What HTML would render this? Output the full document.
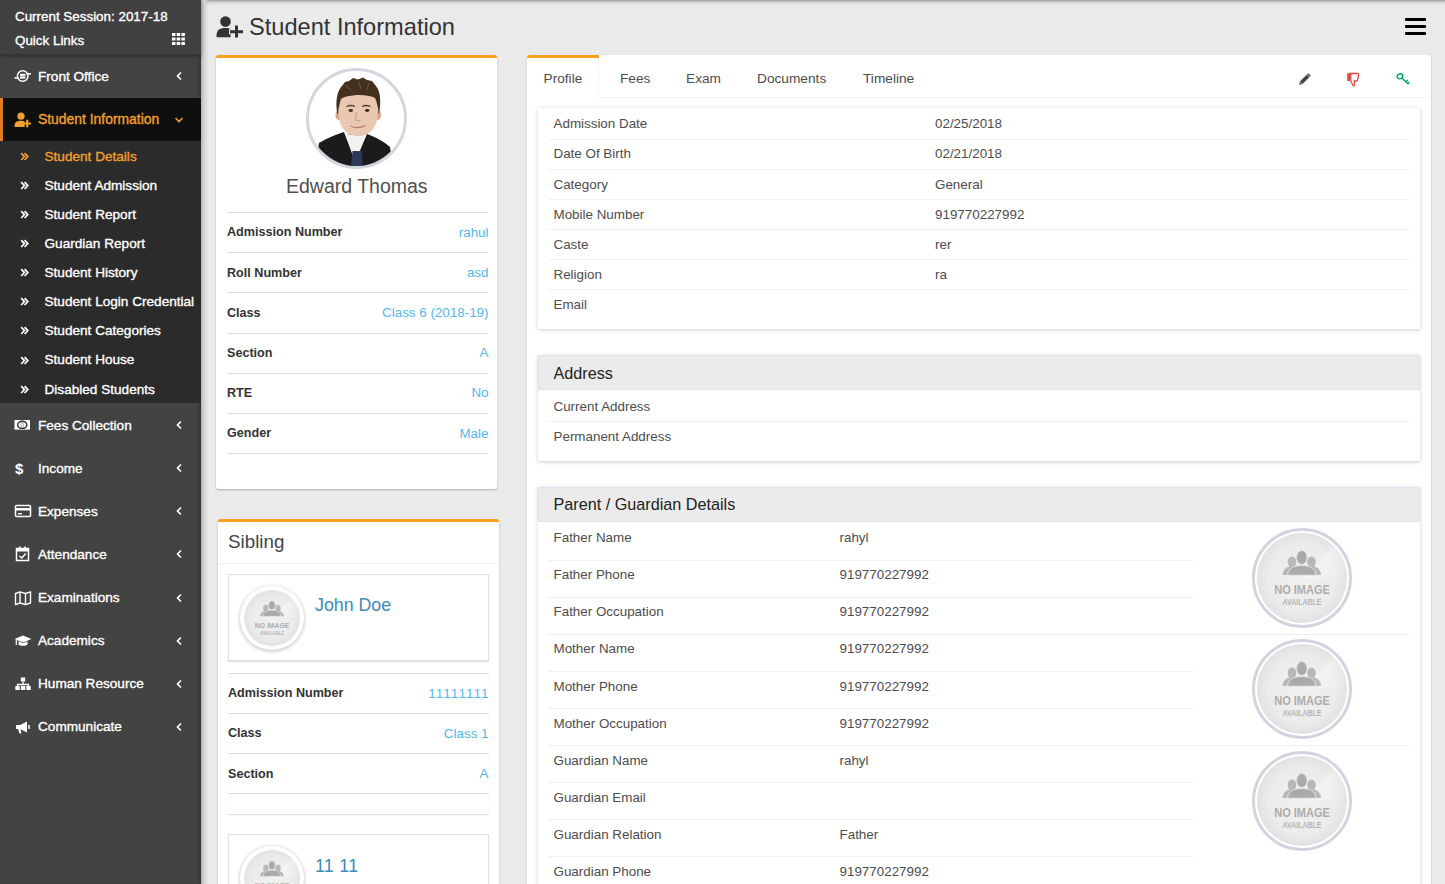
<!DOCTYPE html>
<html><head><meta charset="utf-8">
<style>
*{box-sizing:border-box;}
html,body{margin:0;padding:0;}
body{width:1445px;height:884px;overflow:hidden;position:relative;background:#eaeaea;font-family:"Liberation Sans",sans-serif;color:#333;}
.abs{position:absolute;}
.t{position:absolute;white-space:nowrap;line-height:1;}
/* sidebar */
#sb{position:absolute;left:0;top:0;width:201px;height:884px;background:#434343;box-shadow:inset -2px 0 2px rgba(0,0,0,.18);}
#sbh{position:absolute;left:0;top:0;width:201px;height:54px;background:#414141;box-shadow:0 2px 4px rgba(0,0,0,.35);z-index:2;}
.sbt{position:absolute;color:#fff;font-size:13.4px;white-space:nowrap;line-height:1;-webkit-text-stroke:0.35px #fff;}
.mi{position:absolute;left:0;width:201px;height:43px;}
.mi .lbl{position:absolute;left:38px;top:15.5px;color:#fff;font-size:13.6px;line-height:1;white-space:nowrap;-webkit-text-stroke:0.35px currentColor;}
.mi .ic{position:absolute;left:14px;top:14px;width:18px;height:16px;}
.mi .chev{position:absolute;left:175px;top:17px;width:8px;height:10px;}
#sub{position:absolute;left:0;top:141px;width:201px;height:262px;background:#2b2b2b;}
.si{position:absolute;left:0;width:200px;height:29.1px;}
.si .lbl{position:absolute;left:44.5px;top:8.7px;color:#fff;font-size:13.6px;line-height:1;white-space:nowrap;-webkit-text-stroke:0.35px currentColor;}
.si .rr{position:absolute;left:20px;top:10.8px;width:10px;height:9px;}
/* content */
#topsh{position:absolute;left:201px;top:0;width:1244px;height:5px;background:linear-gradient(#9c9c9c,#cdcdcd 40%,rgba(234,234,234,0));}
#sbsh{position:absolute;left:201px;top:0;width:8px;height:884px;background:linear-gradient(90deg,#b5b5b5,#d5d5d5 40%,rgba(234,234,234,0));}
.box{position:absolute;background:#fff;border-radius:3px;box-shadow:0 1px 2px rgba(0,0,0,.25);}
.otop{border-top:3px solid #f7a01b;}
.row{position:absolute;height:1px;background:#e3e3e3;}
.lab{position:absolute;white-space:nowrap;line-height:1;font-size:12.6px;font-weight:bold;color:#333;}
.val{position:absolute;white-space:nowrap;line-height:1;font-size:13.4px;color:#52b8ec;text-align:right;}
.tab{font-size:13.7px;color:#4d4d4d;}
.plab{position:absolute;white-space:nowrap;line-height:1;font-size:13.4px;color:#4d4d4d;}
</style></head><body>
<svg width="0" height="0" style="position:absolute">
<defs>
<radialGradient id="nig" cx="0.5" cy="0.5" r="0.5"><stop offset="0" stop-color="#f1f1f1"/><stop offset="0.75" stop-color="#ebebeb"/><stop offset="1" stop-color="#e2e2e2"/></radialGradient>
<linearGradient id="nih" x1="0" y1="0" x2="1" y2="1"><stop offset="0.45" stop-color="#fff" stop-opacity="0"/><stop offset="0.55" stop-color="#fff" stop-opacity="0.35"/><stop offset="1" stop-color="#fff" stop-opacity="0"/></linearGradient>
<symbol id="noimg" viewBox="0 0 100 100">
<circle cx="50" cy="50" r="45" fill="url(#nig)"/>
<path d="M50 5 A45 45 0 0 1 95 50 L50 50Z" fill="url(#nih)"/>
<g fill="#b8b8b8">
<ellipse cx="40" cy="34" rx="4.3" ry="5.6"/><ellipse cx="59.5" cy="34" rx="4.3" ry="5.6"/>
<path d="M30.5 47 C31 41 34.5 38.5 40 38.5 C44 38.5 46 40 47 43 L47 47Z"/><path d="M69 47 C68.5 41 65 38.5 59.5 38.5 C55.5 38.5 53.5 40 52.5 43 L52.5 47Z"/>
</g>
<g fill="#aaaaaa" stroke="#e8e8e8" stroke-width="0.9">
<ellipse cx="49.8" cy="29.5" rx="5.3" ry="7"/>
<path d="M35.5 47.2 C36 40.5 41 37.5 49.8 37.5 C58.5 37.5 63.5 40.5 64 47.2Z"/>
</g>
<text x="50" y="66.2" text-anchor="middle" font-family="Liberation Sans" font-weight="bold" font-size="13" fill="#acacac" textLength="55.6" lengthAdjust="spacingAndGlyphs">NO IMAGE</text>
<text x="50" y="76.8" text-anchor="middle" font-family="Liberation Sans" font-weight="bold" font-size="8.3" fill="#b5b5b5" textLength="39" lengthAdjust="spacingAndGlyphs">AVAILABLE</text>
</symbol>
</defs></svg>

<!-- SIDEBAR -->
<div id="sb">
  <div id="sbh">
    <div class="sbt" style="left:15px;top:10px;">Current Session: 2017-18</div>
    <div class="sbt" style="left:15px;top:34px;">Quick Links</div>
    <svg class="abs" style="left:172px;top:33px" width="13" height="12" viewBox="0 0 13 12"><g fill="#fff"><rect x="0" y="0" width="3.5" height="3"/><rect x="4.7" y="0" width="3.5" height="3"/><rect x="9.4" y="0" width="3.5" height="3"/><rect x="0" y="4.5" width="3.5" height="3"/><rect x="4.7" y="4.5" width="3.5" height="3"/><rect x="9.4" y="4.5" width="3.5" height="3"/><rect x="0" y="9" width="3.5" height="3"/><rect x="4.7" y="9" width="3.5" height="3"/><rect x="9.4" y="9" width="3.5" height="3"/></g></svg>
  </div>
<div class="mi" style="top:54.00px"><svg class="ic" viewBox="0 0 18 16"><circle cx="8.7" cy="8" r="5.3" fill="none" stroke="#fff" stroke-width="1.5"/><rect x="6" y="5.8" width="5.4" height="4.8" fill="#fff"/><path d="M6 8.2 H11.4" stroke="#434343" stroke-width="0.5"/><path d="M0.5 9.9 H5" stroke="#fff" stroke-width="1.6"/><path d="M12.5 5.9 H17" stroke="#fff" stroke-width="1.6"/></svg><div class="lbl">Front Office</div><svg class="chev" viewBox="0 0 8 10"><path d="M6 1.5 L2.5 5 L6 8.5" fill="none" stroke="#fff" stroke-width="1.6"/></svg></div>
<div class="mi" style="top:98px;background:#0f0f0f;border-left:3px solid #e07d22"><svg class="ic" style="left:11px" viewBox="0 0 18 16"><circle cx="7" cy="4.2" r="3.6" fill="#f0a030"/><path d="M0.5 15 C0.5 10 2.5 8.8 7 8.8 C9 8.8 10 9.2 10.6 9.6 L10.6 15Z" fill="#f0a030"/><path d="M9.5 11.5 H17 M13.25 7.8 V15.2" stroke="#f0a030" stroke-width="2.2"/></svg><div class="lbl" style="left:35px;top:15px;color:#f0a030;font-size:13.9px">Student Information</div><svg class="chev" style="left:171px;top:17.5px;width:10px;height:8px" viewBox="0 0 10 8"><path d="M1.5 2 L5 5.5 L8.5 2" fill="none" stroke="#f0a030" stroke-width="1.6"/></svg></div>
<div id="sub">
<div class="si" style="top:0.00px"><svg class="rr" viewBox="0 0 10 9"><path d="M1.2 1.2 L4.4 4.6 L1.2 8 M4.6 1.2 L7.8 4.6 L4.6 8" fill="none" stroke="#f0a030" stroke-width="1.7"/></svg><div class="lbl" style="color:#f0a030">Student Details</div></div>
<div class="si" style="top:29.11px"><svg class="rr" viewBox="0 0 10 9"><path d="M1.2 1.2 L4.4 4.6 L1.2 8 M4.6 1.2 L7.8 4.6 L4.6 8" fill="none" stroke="#fff" stroke-width="1.7"/></svg><div class="lbl" style="color:#fff">Student Admission</div></div>
<div class="si" style="top:58.22px"><svg class="rr" viewBox="0 0 10 9"><path d="M1.2 1.2 L4.4 4.6 L1.2 8 M4.6 1.2 L7.8 4.6 L4.6 8" fill="none" stroke="#fff" stroke-width="1.7"/></svg><div class="lbl" style="color:#fff">Student Report</div></div>
<div class="si" style="top:87.33px"><svg class="rr" viewBox="0 0 10 9"><path d="M1.2 1.2 L4.4 4.6 L1.2 8 M4.6 1.2 L7.8 4.6 L4.6 8" fill="none" stroke="#fff" stroke-width="1.7"/></svg><div class="lbl" style="color:#fff">Guardian Report</div></div>
<div class="si" style="top:116.44px"><svg class="rr" viewBox="0 0 10 9"><path d="M1.2 1.2 L4.4 4.6 L1.2 8 M4.6 1.2 L7.8 4.6 L4.6 8" fill="none" stroke="#fff" stroke-width="1.7"/></svg><div class="lbl" style="color:#fff">Student History</div></div>
<div class="si" style="top:145.56px"><svg class="rr" viewBox="0 0 10 9"><path d="M1.2 1.2 L4.4 4.6 L1.2 8 M4.6 1.2 L7.8 4.6 L4.6 8" fill="none" stroke="#fff" stroke-width="1.7"/></svg><div class="lbl" style="color:#fff">Student Login Credential</div></div>
<div class="si" style="top:174.67px"><svg class="rr" viewBox="0 0 10 9"><path d="M1.2 1.2 L4.4 4.6 L1.2 8 M4.6 1.2 L7.8 4.6 L4.6 8" fill="none" stroke="#fff" stroke-width="1.7"/></svg><div class="lbl" style="color:#fff">Student Categories</div></div>
<div class="si" style="top:203.78px"><svg class="rr" viewBox="0 0 10 9"><path d="M1.2 1.2 L4.4 4.6 L1.2 8 M4.6 1.2 L7.8 4.6 L4.6 8" fill="none" stroke="#fff" stroke-width="1.7"/></svg><div class="lbl" style="color:#fff">Student House</div></div>
<div class="si" style="top:232.89px"><svg class="rr" viewBox="0 0 10 9"><path d="M1.2 1.2 L4.4 4.6 L1.2 8 M4.6 1.2 L7.8 4.6 L4.6 8" fill="none" stroke="#fff" stroke-width="1.7"/></svg><div class="lbl" style="color:#fff">Disabled Students</div></div>
</div>
<div class="mi" style="top:403.00px"><svg class="ic" viewBox="0 0 18 16"><rect x="0.5" y="3" width="15.5" height="9.6" fill="#fff"/><ellipse cx="8.25" cy="7.8" rx="4.6" ry="3.6" fill="none" stroke="#2a2a2a" stroke-width="1.4"/><ellipse cx="8.25" cy="7.8" rx="1.3" ry="2.4" fill="none" stroke="#777" stroke-width="0.6"/></svg><div class="lbl">Fees Collection</div><svg class="chev" viewBox="0 0 8 10"><path d="M6 1.5 L2.5 5 L6 8.5" fill="none" stroke="#fff" stroke-width="1.6"/></svg></div>
<div class="mi" style="top:446.13px"><svg class="ic" viewBox="0 0 18 16"><text x="1" y="14" font-family="Liberation Sans" font-weight="bold" font-size="15" fill="#fff">$</text></svg><div class="lbl">Income</div><svg class="chev" viewBox="0 0 8 10"><path d="M6 1.5 L2.5 5 L6 8.5" fill="none" stroke="#fff" stroke-width="1.6"/></svg></div>
<div class="mi" style="top:489.26px"><svg class="ic" viewBox="0 0 18 16"><rect x="1.5" y="2.5" width="15" height="11" rx="1" fill="none" stroke="#fff" stroke-width="1.5"/><rect x="1.5" y="5" width="15" height="2.5" fill="#fff"/><rect x="4" y="10" width="4" height="1.4" fill="#fff"/></svg><div class="lbl">Expenses</div><svg class="chev" viewBox="0 0 8 10"><path d="M6 1.5 L2.5 5 L6 8.5" fill="none" stroke="#fff" stroke-width="1.6"/></svg></div>
<div class="mi" style="top:532.39px"><svg class="ic" viewBox="0 0 18 16"><rect x="2.5" y="2.5" width="12" height="12" fill="none" stroke="#fff" stroke-width="1.5"/><rect x="2.5" y="2.5" width="12" height="3" fill="#fff"/><rect x="5" y="0.5" width="1.6" height="3" fill="#fff"/><rect x="10.4" y="0.5" width="1.6" height="3" fill="#fff"/><path d="M5.5 10 L7.8 12 L11.8 7.5" fill="none" stroke="#fff" stroke-width="1.5"/></svg><div class="lbl">Attendance</div><svg class="chev" viewBox="0 0 8 10"><path d="M6 1.5 L2.5 5 L6 8.5" fill="none" stroke="#fff" stroke-width="1.6"/></svg></div>
<div class="mi" style="top:575.52px"><svg class="ic" viewBox="0 0 18 16"><path d="M1.5 3.5 L6 1.8 L11.5 3.5 L16.5 1.8 L16.5 13 L11.5 14.7 L6 13 L1.5 14.7Z M6 1.8 V13 M11.5 3.5 V14.7" fill="none" stroke="#fff" stroke-width="1.4" stroke-linejoin="round"/></svg><div class="lbl">Examinations</div><svg class="chev" viewBox="0 0 8 10"><path d="M6 1.5 L2.5 5 L6 8.5" fill="none" stroke="#fff" stroke-width="1.6"/></svg></div>
<div class="mi" style="top:618.65px"><svg class="ic" viewBox="0 0 18 16"><path d="M0.5 6 L9 2.5 L17.5 6 L9 9.5Z" fill="#fff"/><path d="M4.5 8.3 V11.5 C6 13.2 12 13.2 13.5 11.5 V8.3 L9 10.2Z" fill="#fff"/><path d="M2.3 6.8 V12" stroke="#fff" stroke-width="1.2"/></svg><div class="lbl">Academics</div><svg class="chev" viewBox="0 0 8 10"><path d="M6 1.5 L2.5 5 L6 8.5" fill="none" stroke="#fff" stroke-width="1.6"/></svg></div>
<div class="mi" style="top:661.78px"><svg class="ic" viewBox="0 0 18 16"><rect x="6.8" y="1.5" width="4.4" height="4" fill="#fff"/><path d="M9 5.5 V8.5 M3.5 10.5 V8.5 H14.5 V10.5" fill="none" stroke="#fff" stroke-width="1.3"/><rect x="1.3" y="10" width="4.4" height="4" fill="#fff"/><rect x="6.8" y="10" width="4.4" height="4" fill="#fff"/><rect x="12.3" y="10" width="4.4" height="4" fill="#fff"/></svg><div class="lbl">Human Resource</div><svg class="chev" viewBox="0 0 8 10"><path d="M6 1.5 L2.5 5 L6 8.5" fill="none" stroke="#fff" stroke-width="1.6"/></svg></div>
<div class="mi" style="top:704.91px"><svg class="ic" viewBox="0 0 18 16"><path d="M2 6 H6 L13 2.5 V13.5 L6 10 H2Z" fill="#fff"/><path d="M4 10 L5.5 14.5 H7.5 L6.5 10Z" fill="#fff"/><path d="M15 6 V10" stroke="#fff" stroke-width="1.5"/></svg><div class="lbl">Communicate</div><svg class="chev" viewBox="0 0 8 10"><path d="M6 1.5 L2.5 5 L6 8.5" fill="none" stroke="#fff" stroke-width="1.6"/></svg></div>
</div>

<!-- CONTENT -->
<div id="topsh"></div>
<div id="sbsh"></div>

<!-- header -->
<svg class="abs" style="left:216px;top:15.7px" width="28" height="22" viewBox="0 0 28 22"><circle cx="9.5" cy="5.6" r="5.3" fill="#333"/><path d="M0.5 20.5 C0.5 14 3 12 9.5 12 C12 12 13.6 12.5 14.6 13.2 L14.6 21.3 L2 21.3 C1 21.3 0.5 21 0.5 20.5Z" fill="#333"/><path d="M13 15.8 H27.5 M20.2 9 V21.5" stroke="#eaeaea" stroke-width="5"/><path d="M14 15.8 H27 M20.5 9.5 V21.5" stroke="#333" stroke-width="3"/></svg>
<div class="t" style="left:249px;top:16px;font-size:23.6px;color:#333;">Student Information</div>
<div class="abs" style="left:1405px;top:18px;width:21px;height:3px;background:#000;border-radius:1px"></div>
<div class="abs" style="left:1405px;top:25px;width:21px;height:3px;background:#000;border-radius:1px"></div>
<div class="abs" style="left:1405px;top:32px;width:21px;height:3px;background:#000;border-radius:1px"></div>

<!-- profile box -->
<div class="box otop" style="left:216px;top:55px;width:281px;height:434px;"></div>
<div class="abs" style="left:306px;top:68px;width:101px;height:101px;border-radius:50%;border:3px solid #d2d6de;background:#fff;overflow:hidden">
<svg width="95" height="95" viewBox="0 0 95 95" style="position:absolute;left:0;top:0">
<path d="M10 72 C20 66 29 63 35 61 L46 90 L58 63 C66 66 76 71 81 76 L84 95 L6 95Z" fill="#1b1b1b"/>
<path d="M36 59 L46 92 L58 62 L57 55 L38 55Z" fill="#f1f1f1"/>
<path d="M43.5 80 L52.5 80 L54 95 L42 95Z" fill="#2e3a5a"/>
<rect x="39" y="52" width="19" height="12" fill="#dfb397"/>
<ellipse cx="29.5" cy="44" rx="3" ry="5" fill="#d9a88c"/><ellipse cx="69" cy="44" rx="3" ry="5" fill="#d9a88c"/>
<path d="M30 31 C30 24 38 21 49.3 21 C60.5 21 68.5 24 68.5 31 L68.5 45 C68.5 56 60 65 49.3 65 C38.5 65 30 56 30 45Z" fill="#eac7b0"/>
<path d="M28.5 44 C26 30 28 20 33 15 L36 11 L40 10 L44 7 L49 8.5 L54 6.5 L58 9 L63 10 L67 15 C72 21 72 32 70 44 C69 37 68 31 66 27 C60 24 50 23.5 44 24.5 C38 25 34 26 32 28 C30.5 33 29.5 38 28.5 44Z" fill="#43301f"/><path d="M36 14 L42 19 M50 11 L52 18 M60 12 L58 19" stroke="#6a4a33" stroke-width="1.2"/>
<path d="M37.5 35.5 Q42 33.5 46 35.5 M53 35.5 Q57 33.5 61.5 35.5" stroke="#5b4030" stroke-width="1.3" fill="none"/>
<ellipse cx="41.8" cy="39.5" rx="2.2" ry="1.4" fill="#3b2a20"/><ellipse cx="58.2" cy="39.5" rx="2.2" ry="1.4" fill="#3b2a20"/>
<path d="M47.5 41 L46.5 49 Q49 50.5 52 49" stroke="#c99a80" stroke-width="1" fill="none"/>
<path d="M41.5 55 Q49 58.5 56.5 54.5" stroke="#b47d66" stroke-width="1.3" fill="none"/>
</svg></div>
<div class="t" style="left:286px;top:176.5px;font-size:19.5px;color:#505050;">Edward Thomas</div>
<div class="row" style="left:227px;top:212.0px;width:261px;background:#dcdcdc"></div>
<div class="lab" style="left:227px;top:226.3px">Admission Number</div>
<div class="val" style="right:956.5px;top:225.6px">rahul</div>
<div class="row" style="left:227px;top:252.2px;width:261px;background:#dcdcdc"></div>
<div class="lab" style="left:227px;top:266.5px">Roll Number</div>
<div class="val" style="right:956.5px;top:265.8px">asd</div>
<div class="row" style="left:227px;top:292.4px;width:261px;background:#dcdcdc"></div>
<div class="lab" style="left:227px;top:306.7px">Class</div>
<div class="val" style="right:956.5px;top:306.0px">Class 6 (2018-19)</div>
<div class="row" style="left:227px;top:332.6px;width:261px;background:#dcdcdc"></div>
<div class="lab" style="left:227px;top:346.9px">Section</div>
<div class="val" style="right:956.5px;top:346.2px">A</div>
<div class="row" style="left:227px;top:372.8px;width:261px;background:#dcdcdc"></div>
<div class="lab" style="left:227px;top:387.1px">RTE</div>
<div class="val" style="right:956.5px;top:386.4px">No</div>
<div class="row" style="left:227px;top:413.0px;width:261px;background:#dcdcdc"></div>
<div class="lab" style="left:227px;top:427.3px">Gender</div>
<div class="val" style="right:956.5px;top:426.6px">Male</div>
<div class="row" style="left:227px;top:453.2px;width:261px;background:#dcdcdc"></div>


<!-- sibling box -->
<div class="box otop" style="left:218px;top:519px;width:281px;height:400px;"></div>
<div class="t" style="left:228px;top:532.5px;font-size:18.8px;color:#444;">Sibling</div>
<div class="row" style="left:218px;top:563px;width:281px;background:#f0f0f0"></div>
<div class="abs" style="left:228px;top:574px;width:261px;height:87px;border:1px solid #e1e1e1;box-shadow:0 1px 1px rgba(0,0,0,.12);background:#fff"></div>
<div class="abs" style="left:240px;top:586px;width:64px;height:64px;border-radius:50%;background:#fff;box-shadow:0 1px 4px rgba(0,0,0,.28)"></div>
<svg class="abs" style="left:240.5px;top:587.2px" width="62.2" height="62.2"><use href="#noimg"/></svg>
<div class="t" style="left:315px;top:597px;font-size:17.8px;color:#3c8dbc;">John Doe</div>
<div class="abs" style="left:228px;top:673px;width:261px;height:141px;box-shadow:0 1px 1px rgba(0,0,0,.12);background:#fff;border-top:1px solid #ddd"></div>
<div class="lab" style="left:228px;top:687.3px">Admission Number</div>
<div class="val" style="right:956.5px;top:686.6px;letter-spacing:1.1px;margin-right:-1.1px">11111111</div>
<div class="row" style="left:228px;top:713.1px;width:261px;background:#ddd"></div>
<div class="lab" style="left:228px;top:727.4px">Class</div>
<div class="val" style="right:956.5px;top:726.7px">Class 1</div>
<div class="row" style="left:228px;top:753.2px;width:261px;background:#ddd"></div>
<div class="lab" style="left:228px;top:767.5px">Section</div>
<div class="val" style="right:956.5px;top:766.8px">A</div>
<div class="row" style="left:228px;top:793px;width:261px;background:#ddd"></div>
<div class="abs" style="left:228px;top:834px;width:261px;height:87px;border:1px solid #e1e1e1;box-shadow:0 1px 1px rgba(0,0,0,.12);background:#fff"></div>
<div class="abs" style="left:240px;top:846px;width:64px;height:64px;border-radius:50%;background:#fff;box-shadow:0 1px 4px rgba(0,0,0,.28)"></div>
<svg class="abs" style="left:240.5px;top:847.2px" width="62.2" height="62.2"><use href="#noimg"/></svg>
<div class="t" style="left:315px;top:857.5px;font-size:17.8px;color:#3c8dbc;letter-spacing:0.3px">11 11</div>

<!-- main tabs box -->
<div class="box" style="left:527px;top:55px;width:904px;height:900px;"></div>
<div class="abs" style="left:527px;top:55px;width:72px;height:3px;background:#f7a01b;border-radius:3px 0 0 0"></div>
<div class="abs" style="left:598px;top:58px;width:1px;height:40px;background:#f4f4f4"></div>
<div class="abs" style="left:599px;top:97px;width:832px;height:1px;background:#f4f4f4"></div>
<div class="t tab" style="left:543.5px;top:72px;">Profile</div>
<div class="t tab" style="left:620px;top:72px;">Fees</div>
<div class="t tab" style="left:686px;top:72px;">Exam</div>
<div class="t tab" style="left:757px;top:72px;">Documents</div>
<div class="t tab" style="left:863px;top:72px;">Timeline</div>
<svg class="abs" style="left:1298px;top:72px" width="14" height="14" viewBox="0 0 14 14"><path d="M10.2 1.2 L12.8 3.8 L4.5 12.1 L1.2 12.8 L1.9 9.5Z" fill="#444"/><path d="M9 2.4 L11.6 5" stroke="#fff" stroke-width="0.8"/><path d="M1.9 9.5 L4.5 12.1" stroke="#fff" stroke-width="0.6"/></svg>
<svg class="abs" style="left:1346px;top:72px" width="14" height="15" viewBox="0 0 14 15"><path d="M2.5 1.5 H11.5 C12.3 1.5 12.8 2.2 12.6 3 L11.6 8 C11.4 8.6 11 9 10.4 9 H8.2 L8.6 12.5 C8.7 13.6 7.6 14.2 7 13.4 L4.8 9.2 V1.8" fill="none" stroke="#dd4b39" stroke-width="1.3"/><rect x="1.2" y="1.5" width="3" height="7.5" fill="#dd4b39"/></svg>
<svg class="abs" style="left:1396px;top:72px" width="15" height="14" viewBox="0 0 15 14"><ellipse cx="4" cy="4.3" rx="2.9" ry="2.4" transform="rotate(-35 4 4.3)" fill="none" stroke="#00a65a" stroke-width="1.4"/><path d="M5.8 6 L12.6 12.3 M10 9.6 L11.7 7.9 M11.8 11.5 L13.4 9.9" stroke="#00a65a" stroke-width="1.4"/></svg>

<!-- profile table -->
<div class="box" style="left:538px;top:108px;width:882px;height:221px;box-shadow:0 1px 4px rgba(0,0,0,.2);border-radius:0"></div>
<div class="plab" style="left:553.5px;top:117.3px">Admission Date</div>
<div class="plab" style="left:935px;top:117.3px">02/25/2018</div>
<div class="row" style="left:548px;top:138.9px;width:862px;background:#f2f2f2"></div>
<div class="plab" style="left:553.5px;top:147.4px">Date Of Birth</div>
<div class="plab" style="left:935px;top:147.4px">02/21/2018</div>
<div class="row" style="left:548px;top:169.0px;width:862px;background:#f2f2f2"></div>
<div class="plab" style="left:553.5px;top:177.5px">Category</div>
<div class="plab" style="left:935px;top:177.5px">General</div>
<div class="row" style="left:548px;top:199.1px;width:862px;background:#f2f2f2"></div>
<div class="plab" style="left:553.5px;top:207.6px">Mobile Number</div>
<div class="plab" style="left:935px;top:207.6px">919770227992</div>
<div class="row" style="left:548px;top:229.2px;width:862px;background:#f2f2f2"></div>
<div class="plab" style="left:553.5px;top:237.7px">Caste</div>
<div class="plab" style="left:935px;top:237.7px">rer</div>
<div class="row" style="left:548px;top:259.3px;width:862px;background:#f2f2f2"></div>
<div class="plab" style="left:553.5px;top:267.8px">Religion</div>
<div class="plab" style="left:935px;top:267.8px">ra</div>
<div class="row" style="left:548px;top:289.4px;width:862px;background:#f2f2f2"></div>
<div class="plab" style="left:553.5px;top:297.9px">Email</div>

<!-- address -->
<div class="box" style="left:538px;top:355px;width:882px;height:106px;box-shadow:0 1px 4px rgba(0,0,0,.2);border-radius:0"></div>
<div class="abs" style="left:538px;top:355px;width:882px;height:35px;background:#ebebeb;border:1px solid #dfe3ea;border-bottom:1px solid #dde2ea;border-radius:0"></div>
<div class="t" style="left:553.5px;top:364.5px;font-size:16.2px;color:#222;">Address</div>
<div class="plab" style="left:553.5px;top:400px">Current Address</div>
<div class="row" style="left:548px;top:421px;width:862px;background:#f2f2f2"></div>
<div class="plab" style="left:553.5px;top:430px">Permanent Address</div>

<!-- parent -->
<div class="box" style="left:538px;top:487px;width:882px;height:420px;box-shadow:0 1px 4px rgba(0,0,0,.2);border-radius:0"></div>
<div class="abs" style="left:538px;top:487px;width:882px;height:35px;background:#ebebeb;border:1px solid #dfe3ea;border-bottom:1px solid #dde2ea;border-radius:0"></div>
<div class="t" style="left:553.5px;top:495.5px;font-size:16.2px;color:#222;">Parent / Guardian Details</div>
<div class="plab" style="left:553.5px;top:530.9px">Father Name</div>
<div class="plab" style="left:839.5px;top:530.9px">rahyl</div>
<div class="plab" style="left:553.5px;top:568.0px">Father Phone</div>
<div class="plab" style="left:839.5px;top:568.0px">919770227992</div>
<div class="plab" style="left:553.5px;top:605.2px">Father Occupation</div>
<div class="plab" style="left:839.5px;top:605.2px">919770227992</div>
<div class="plab" style="left:553.5px;top:642.3px">Mother Name</div>
<div class="plab" style="left:839.5px;top:642.3px">919770227992</div>
<div class="plab" style="left:553.5px;top:679.5px">Mother Phone</div>
<div class="plab" style="left:839.5px;top:679.5px">919770227992</div>
<div class="plab" style="left:553.5px;top:716.6px">Mother Occupation</div>
<div class="plab" style="left:839.5px;top:716.6px">919770227992</div>
<div class="plab" style="left:553.5px;top:753.8px">Guardian Name</div>
<div class="plab" style="left:839.5px;top:753.8px">rahyl</div>
<div class="plab" style="left:553.5px;top:791.0px">Guardian Email</div>
<div class="plab" style="left:553.5px;top:828.1px">Guardian Relation</div>
<div class="plab" style="left:839.5px;top:828.1px">Father</div>
<div class="plab" style="left:553.5px;top:865.2px">Guardian Phone</div>
<div class="plab" style="left:839.5px;top:865.2px">919770227992</div>
<div class="row" style="left:548px;top:559.5px;width:645px;background:#f0f0f0"></div>
<div class="row" style="left:548px;top:596.6px;width:645px;background:#f0f0f0"></div>
<div class="row" style="left:548px;top:633.6px;width:862px;background:#f0f0f0"></div>
<div class="row" style="left:548px;top:670.6px;width:645px;background:#f0f0f0"></div>
<div class="row" style="left:548px;top:707.8px;width:645px;background:#f0f0f0"></div>
<div class="row" style="left:548px;top:744.8px;width:862px;background:#f0f0f0"></div>
<div class="row" style="left:548px;top:782.0px;width:645px;background:#f0f0f0"></div>
<div class="row" style="left:548px;top:819.1px;width:645px;background:#f0f0f0"></div>
<div class="row" style="left:548px;top:856.2px;width:645px;background:#f0f0f0"></div>
<div class="abs" style="left:1252px;top:528px;width:100px;height:100px;border-radius:50%;border:3px solid #d0d4de;background:#fff"></div>
<svg class="abs" style="left:1252px;top:528px" width="100" height="100"><use href="#noimg"/></svg>
<div class="abs" style="left:1252px;top:639px;width:100px;height:100px;border-radius:50%;border:3px solid #d0d4de;background:#fff"></div>
<svg class="abs" style="left:1252px;top:639px" width="100" height="100"><use href="#noimg"/></svg>
<div class="abs" style="left:1252px;top:750.5px;width:100px;height:100px;border-radius:50%;border:3px solid #d0d4de;background:#fff"></div>
<svg class="abs" style="left:1252px;top:750.5px" width="100" height="100"><use href="#noimg"/></svg>

</body></html>
